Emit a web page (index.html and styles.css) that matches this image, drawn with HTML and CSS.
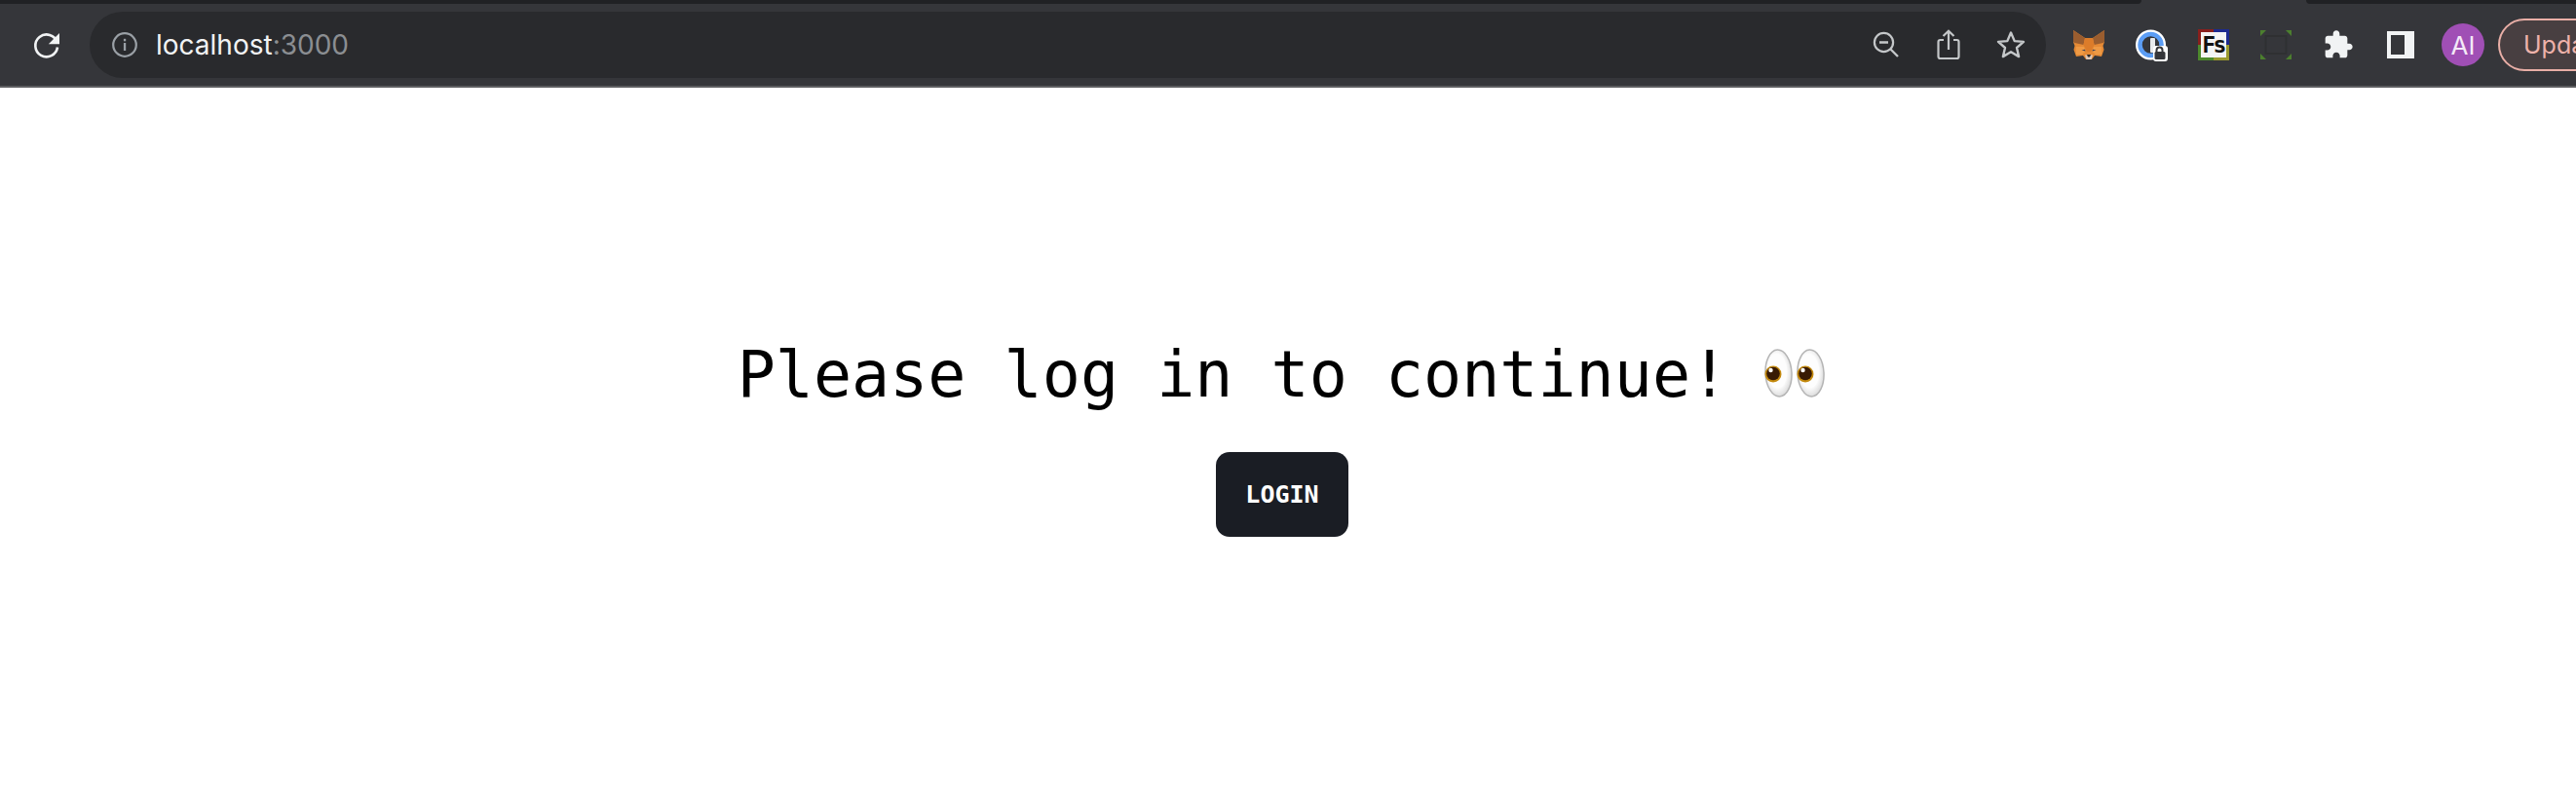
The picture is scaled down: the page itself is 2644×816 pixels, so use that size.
FILE: index.html
```html
<!DOCTYPE html>
<html>
	<head>
		<meta charset="utf-8">
		<title>localhost:3000</title>
		<link rel="stylesheet" href="styles.css">
	</head>
	<body>
		<div class="tabstrip"><div class="tab tab-left"></div><div class="tab tab-right"></div></div>
		<div class="toolbar">
			<div class="slot">
				<svg width="32" height="32" viewBox="0 0 32 32"><path d="M26.600 13.500A11.400 11.400 0 1 0 27 18.500" fill="none" stroke="#f1f3f4" stroke-width="2.600"/><path d="M29 4v11.200H17.800z" fill="#f1f3f4"/></svg>
			</div>
			<div class="omnibox">
				<div class="info">
					<svg width="28" height="28" viewBox="0 0 28 28"><circle cx="14" cy="14" r="11.800" fill="none" stroke="#9aa0a6" stroke-width="2.200"/><rect x="12.900" y="12" width="2.300" height="8" fill="#9aa0a6"/><rect x="12.900" y="7.800" width="2.300" height="2.500" fill="#9aa0a6"/></svg>
				</div>
				<span class="host">localhost<span class="port">:3000</span></span>
				<div class="omni-actions">
					<div class="slot">
						<svg width="30" height="30" viewBox="0 0 30 30"><circle cx="12.500" cy="12.500" r="9.600" fill="none" stroke="#c4c7c9" stroke-width="2.200"/><path d="M8 12.500h9M19.500 19.500l7.500 7.500" fill="none" stroke="#c4c7c9" stroke-width="2.400"/></svg>
					</div>
					<div class="slot">
						<svg width="24" height="32" viewBox="0 0 24 32"><path d="M7 11H3.500a2 2 0 0 0-2 2v15a2 2 0 0 0 2 2h17a2 2 0 0 0 2-2V13a2 2 0 0 0-2-2H17M12 21V2M6.500 7L12 1.800 17.500 7" fill="none" stroke="#c4c7c9" stroke-width="2.200"/></svg>
					</div>
					<div class="slot">
						<svg width="32" height="32" viewBox="0 0 32 32"><path d="M16 3.500l3.700 8.600 9.300.8-7 6.100 2.100 9.100-8.100-4.800-8.100 4.800 2.100-9.100-7-6.100 9.300-.8z" fill="none" stroke="#c4c7c9" stroke-width="2.400" stroke-linejoin="round"/></svg>
					</div>
				</div>
			</div>
			<div class="extensions">
				<div class="slot">
					<svg width="32" height="30" viewBox="0 0 32 30">
						<path d="M0 0L12 8H20L32 0V12L30.500 16 31.500 20 29 27 22 26 19 30H13L10 26 3 27 .5 20 1.500 16 0 12z" fill="#e58a35"/>
						<path d="M0 0L12 8 10.500 15 1.500 13 0 12zM32 0L20 8 21.500 15 30.500 13 32 12z" fill="#9a5d2f"/>
						<path d="M12 8H20L21.500 15 18 22H14L10.500 15z" fill="#dc7c2a"/>
						<path d="M3 17L11 17 12.500 22 9 25 3 25zM29 17L21 17 19.500 22 23 25 29 25z" fill="#ee9a45"/>
						<path d="M8.500 20.500l3.500-.8.500 1.800zM23.500 20.500l-3.500-.8-.5 1.800z" fill="#3a3f55"/>
						<path d="M12 25.500H20L18.500 30H13.500z" fill="#dcc8ba"/><path d="M14 25h4L17 27.500h-2z" fill="#2e2a28"/>
					</svg>
				</div>
				<div class="slot">
					<svg width="34" height="34" viewBox="0 0 34 34">
						<circle cx="16.500" cy="17" r="15.500" fill="#fff"/>
						<circle cx="16.500" cy="17" r="11" fill="#35363a" stroke="#5b9df5" stroke-width="4.500"/>
						<rect x="16" y="10" width="5" height="15" rx="1" fill="#e8eaed"/>
						<rect x="19" y="18" width="15" height="16" rx="3" fill="#fff"/>
						<path d="M22.500 25v-2.500a3 3 0 0 1 6 0V25" fill="none" stroke="#35363a" stroke-width="2"/>
						<rect x="20.500" y="24" width="11" height="8" rx="1.500" fill="#35363a"/>
					</svg>
				</div>
				<div class="slot">
					<svg width="32" height="32" viewBox="0 0 32 32">
						<rect width="16" height="16" fill="#8a1f1c"/><rect x="16" width="16" height="16" fill="#1d2a8f"/>
						<rect y="16" width="16" height="16" fill="#4d8a2c"/><rect x="16" y="16" width="16" height="16" fill="#9a9a2e"/>
						<rect x="3" y="3" width="26" height="26" fill="#f4f4f4"/>
						<text class="fs-mark" x="15.500" y="24">Fs</text>
					</svg>
				</div>
				<div class="slot">
					<svg width="32" height="30" viewBox="0 0 32 30">
						<path d="M0 0h6L0 6zM32 0h-6l6 6zM0 30h6l-6-6zM32 30h-6l6-6z" fill="#4c7f2e"/>
						<rect x="5.500" y="6" width="21" height="18" fill="none" stroke="#2f3032" stroke-width="2"/>
					</svg>
				</div>
				<div class="slot">
					<svg width="32" height="32" viewBox="0 0 24 24"><path fill="#f1f3f4" d="M20.500 11H19V7c0-1.100-.9-2-2-2h-4V3.500C13 2.120 11.880 1 10.500 1S8 2.120 8 3.500V5H4c-1.100 0-1.990.9-1.990 2v3.800H3.500c1.490 0 2.700 1.210 2.700 2.700s-1.210 2.700-2.700 2.700H2V20c0 1.100.9 2 2 2h3.800v-1.500c0-1.490 1.210-2.700 2.700-2.700 1.490 0 2.700 1.210 2.700 2.700V22H17c1.100 0 2-.9 2-2v-4h1.500c1.380 0 2.500-1.120 2.500-2.500S21.880 11 20.500 11z"/></svg>
				</div>
				<div class="slot"><div class="side-panel"></div></div>
				<div class="slot"><div class="avatar">AI</div></div>
			</div>
			<div class="update">Update</div>
		</div>
		<div class="page">
			<h1 class="title">Please log in to continue! <svg class="eyes" width="62" height="50" viewBox="0 0 62 50">
				<defs>
					<radialGradient id="eyewhite" cx="0.45" cy="0.45" r="0.6"><stop offset="0.6" stop-color="#fdfdfd"/><stop offset="1" stop-color="#d4d4d4"/></radialGradient>
				</defs>
				<ellipse cx="14.500" cy="25" rx="13.500" ry="24" transform="rotate(-3 14.500 25)" fill="url(#eyewhite)" stroke="#b5b5b5" stroke-width="1.500"/>
				<ellipse cx="47.500" cy="25" rx="13.500" ry="24" transform="rotate(-3 47.500 25)" fill="url(#eyewhite)" stroke="#b5b5b5" stroke-width="1.500"/>
				<circle cx="9" cy="26" r="8.500" fill="#c48a0e"/>
				<circle cx="42" cy="26" r="8.500" fill="#c48a0e"/>
				<circle cx="9" cy="25.500" r="6.800" fill="#381a04"/>
				<circle cx="42" cy="25.500" r="6.800" fill="#381a04"/>
				<circle cx="6.500" cy="22" r="2.200" fill="#fff"/><circle cx="39.500" cy="22" r="2.200" fill="#fff"/>
			</svg></h1>
			<button class="login">LOGIN</button>
		</div>
	</body>
</html>
```

FILE: styles.css
```css
html, body {
	margin: 0;
	height: 100%;
	overflow: hidden;
	background: #fff;
}

.tabstrip {
	display: flex;
	justify-content: space-between;
	height: 4px;
	background: #35363a;
}
.tab {
	background: #202124;
}
.tab-left {
	width: 2198px;
	border-bottom-right-radius: 4px;
}
.tab-right {
	width: 277px;
	border-bottom-left-radius: 4px;
}

.toolbar {
	display: flex;
	align-items: center;
	height: 84px;
	padding-left: 16px;
	background: #35363a;
	border-bottom: 2px solid #5c5d60;
	overflow: hidden;
}
.slot {
	display: flex;
	flex: none;
	align-items: center;
	justify-content: center;
	width: 64px;
	height: 64px;
}

.omnibox {
	display: flex;
	flex: none;
	align-items: center;
	width: 2008px;
	height: 68px;
	margin: 0 12px;
	padding-right: 4px;
	box-sizing: border-box;
	background: #292a2d;
	border-radius: 34px;
}
.info {
	display: flex;
	align-items: center;
	margin: 0 18px 0 22px;
}
.host {
	font: 28px "Inter", "Liberation Sans", sans-serif;
	color: #f1f3f4;
}
.port {
	color: #8b8e92;
}
.omni-actions {
	display: flex;
	margin-left: auto;
}

.extensions {
	display: flex;
	flex: none;
}
.fs-mark {
	font: bold 23px "DejaVu Sans Mono", monospace;
	letter-spacing: -2.500px;
	fill: #111;
	text-anchor: middle;
}
.side-panel {
	width: 14px;
	height: 20px;
	border: 4px solid #f1f3f4;
	border-right-width: 10px;
	background: #35363a;
}
.avatar {
	display: flex;
	align-items: center;
	justify-content: center;
	width: 44px;
	height: 44px;
	border-radius: 50%;
	background: #a04fb5;
	color: #f4e9f7;
	font: 26px "Inter", "Liberation Sans", sans-serif;
}
.update {
	flex: none;
	width: 160px;
	height: 54px;
	margin-left: 4px;
	padding-left: 24px;
	box-sizing: border-box;
	border: 2px solid #e8aea6;
	border-radius: 28px;
	background: #483f41;
	color: #eeb2aa;
	font: 25px/50px "Inter", "Liberation Sans", sans-serif;
}

.page {
	display: flex;
	flex-direction: column;
	align-items: center;
	padding: 247px 12px 0 0;
}
.title {
	margin: 0 0 31px;
	font: normal 65px/96px "DejaVu Sans Mono", monospace;
	color: #000;
	white-space: pre;
}
.eyes {
	margin: 0 2px 0 -2px;
	vertical-align: -1px;
}
.login {
	width: 136px;
	height: 87px;
	padding: 0;
	border: 0;
	border-radius: 14px;
	background: #1a1d24;
	color: #fff;
	font: bold 25px "DejaVu Sans Mono", monospace;
}
```
